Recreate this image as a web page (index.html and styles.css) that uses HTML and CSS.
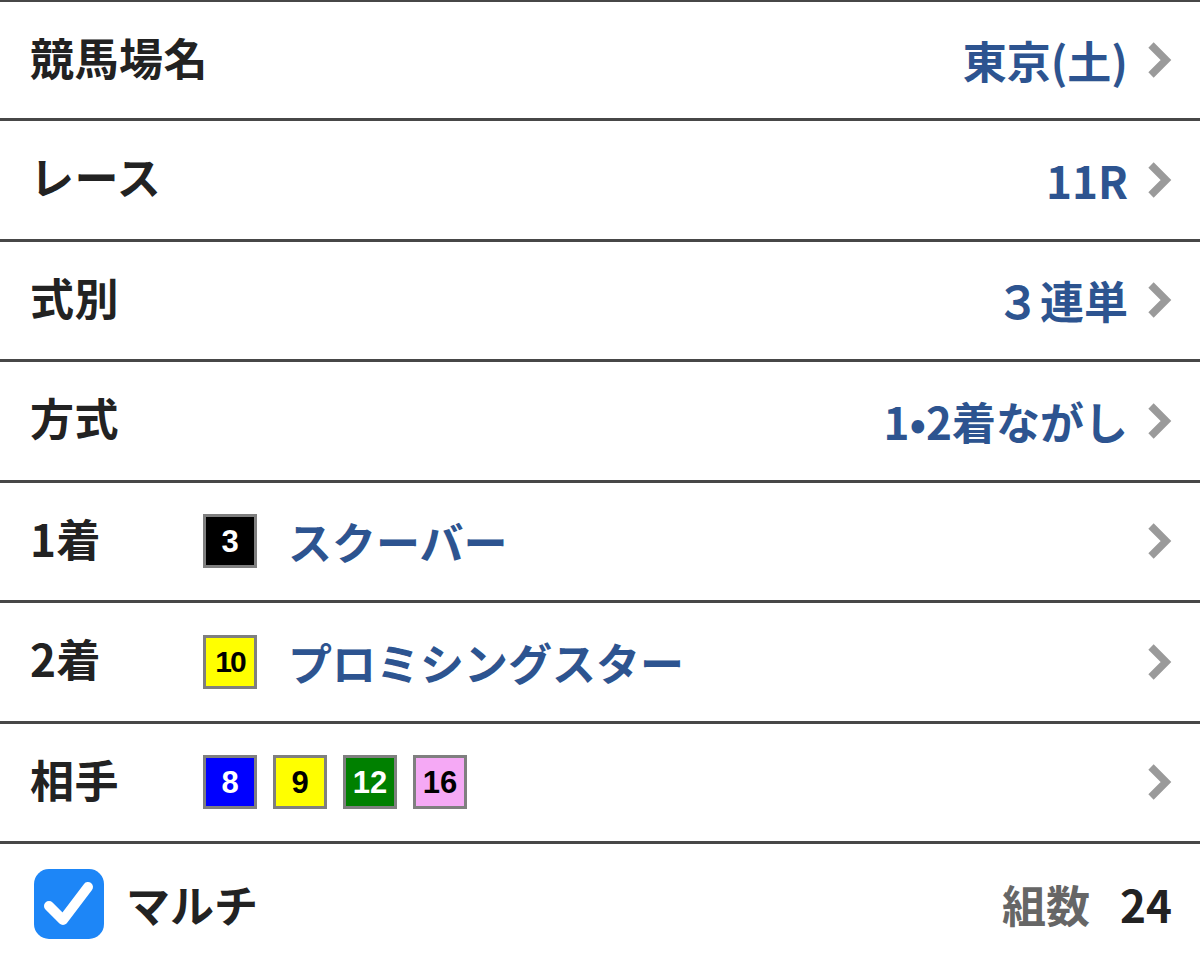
FILE: index.html
```html
<!DOCTYPE html>
<html lang="ja">
<head>
<meta charset="utf-8">
<title>投票</title>
<link rel="stylesheet" href="styles.css">
</head>
<body>
<div class="list">
  <div class="row">
    <span class="label">競馬場名</span>
    <span class="value">東京(土)</span>
    <svg class="chev" viewBox="0 0 25 36" width="25" height="36"><polyline points="4,3 19,18 4,33"/></svg>
  </div>
  <div class="row">
    <span class="label">レース</span>
    <span class="value">11R</span>
    <svg class="chev" viewBox="0 0 25 36" width="25" height="36"><polyline points="4,3 19,18 4,33"/></svg>
  </div>
  <div class="row">
    <span class="label">式別</span>
    <span class="value">３連単</span>
    <svg class="chev" viewBox="0 0 25 36" width="25" height="36"><polyline points="4,3 19,18 4,33"/></svg>
  </div>
  <div class="row">
    <span class="label">方式</span>
    <span class="value">1•2着ながし</span>
    <svg class="chev" viewBox="0 0 25 36" width="25" height="36"><polyline points="4,3 19,18 4,33"/></svg>
  </div>
  <div class="row">
    <span class="label label-col">1着</span>
    <span class="badge b-black">3</span>
    <span class="horse">スクーバー</span>
    <span class="spacer"></span>
    <svg class="chev" viewBox="0 0 25 36" width="25" height="36"><polyline points="4,3 19,18 4,33"/></svg>
  </div>
  <div class="row">
    <span class="label label-col">2着</span>
    <span class="badge b-yellow narrow">10</span>
    <span class="horse">プロミシングスター</span>
    <span class="spacer"></span>
    <svg class="chev" viewBox="0 0 25 36" width="25" height="36"><polyline points="4,3 19,18 4,33"/></svg>
  </div>
  <div class="row">
    <span class="label label-col">相手</span>
    <span class="badges">
      <span class="badge b-blue">8</span>
      <span class="badge b-yellow">9</span>
      <span class="badge b-green">12</span>
      <span class="badge b-pink">16</span>
    </span>
    <span class="spacer"></span>
    <svg class="chev" viewBox="0 0 25 36" width="25" height="36"><polyline points="4,3 19,18 4,33"/></svg>
  </div>
  <div class="row row-last">
    <span class="check">
      <svg viewBox="0 0 70 70" width="70" height="70"><polyline points="15,37 29,51 54,18"/></svg>
    </span>
    <span class="multi">マルチ</span>
    <span class="spacer"></span>
    <span class="count-label">組数</span>
    <span class="count">24</span>
  </div>
</div>
</body>
</html>
```
FILE: styles.css
```css
html, body {
  margin: 0;
  padding: 0;
  background: #ffffff;
  overflow: hidden;
}
body {
  font-family: "Noto Sans CJK JP", "Noto Sans", sans-serif;
  font-weight: 700;
  color: #222222;
}
.list {
  border-top: 2px solid #474747;
}
.row {
  display: flex;
  align-items: center;
  height: 120.5px;
  box-sizing: border-box;
  border-bottom: 3px solid #474747;
  padding: 0 28px 0 30px;
}
.row:first-child {
  height: 119px;
}
.row-last {
  border-bottom: none;
  height: 120px;
  padding-left: 34px;
}
.label {
  font-size: 44px;
  line-height: 1;
  color: #222222;
  flex: 1;
  padding-bottom: 7px;
  letter-spacing: 0.5px;
}
.label-col {
  flex: 0 0 173px;
}
.value {
  font-size: 44px;
  line-height: 1;
  color: #2d5490;
  margin-right: 19px;
}
.chev {
  flex: 0 0 auto;
  display: block;
}
.chev polyline {
  fill: none;
  stroke: #9a9a9a;
  stroke-width: 7.5;
  stroke-linejoin: miter;
  stroke-linecap: butt;
}
.spacer {
  flex: 1;
}
.badges {
  display: flex;
  gap: 16px;
}
.badge {
  display: flex;
  align-items: center;
  justify-content: center;
  width: 54px;
  height: 54px;
  box-sizing: border-box;
  border: 3px solid #7f7f7f;
  font-family: "Liberation Sans", Arial, sans-serif;
  font-weight: 700;
  font-size: 31px;
  line-height: 1;
}
.narrow {
  letter-spacing: -2px;
  font-size: 30px;
}
.b-black { background: #000000; color: #ffffff; }
.b-yellow { background: #ffff00; color: #000000; }
.b-blue { background: #0000ff; color: #ffffff; }
.b-green { background: #008000; color: #ffffff; }
.b-pink { background: #f5a9f5; color: #000000; }
.horse {
  font-size: 44px;
  line-height: 1;
  color: #2d5490;
  margin-left: 31px;
}
.check {
  width: 70px;
  height: 70px;
  border-radius: 15px;
  background: #1d86f7;
  display: block;
  flex: 0 0 auto;
}
.check svg {
  display: block;
}
.check polyline {
  fill: none;
  stroke: #ffffff;
  stroke-width: 10;
  stroke-linecap: round;
  stroke-linejoin: round;
}
.multi {
  font-size: 44px;
  line-height: 1;
  color: #222222;
  margin-left: 22px;
}
.count-label {
  font-size: 44px;
  line-height: 1;
  color: #666666;
  margin-right: 30px;
}
.count {
  font-size: 44px;
  line-height: 1;
  color: #222222;
}
```
